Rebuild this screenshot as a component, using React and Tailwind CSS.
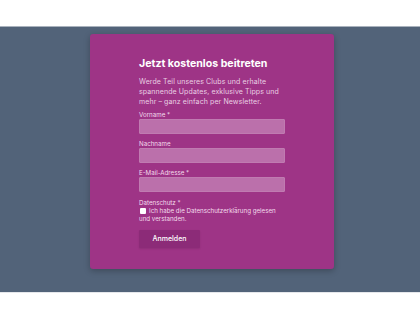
import React from "react";

const Field = ({ label }) => (
    <div className="flex flex-col">
        <label className="text-[6.2px] leading-[8px] text-[#f3dcec]">{label}</label>
        <input
            type="text"
            className="h-[15px] w-full bg-[#bb70ab] border border-[#c07bb1] rounded-[1px] outline-none"
        />
    </div>
);

export default function App() {
    return (
        <div className="w-[420px] h-[313px] bg-white font-['Inter',sans-serif]">
            <div className="h-[26px] bg-white" />
            <section className="h-[266px] bg-[#526379] border-t border-[#a9b2bd] pt-[7px]">
                <div className="ml-[90px] w-[244px] h-[235px] bg-[#9e3486] rounded-[3px] shadow-[0_2px_6px_rgba(0,0,0,0.25)] px-[49px] pt-[23px]">
                    <h2 className="text-[10.6px] leading-[14px] font-bold text-white">
                        Jetzt kostenlos beitreten
                    </h2>
                    <p className="mt-[6px] text-[7px] leading-[10px] tracking-[0.1px] text-[#e9cfe3]">
                        Werde Teil unseres Clubs und erhalte spannende Updates, exklusive Tipps und mehr – ganz einfach per Newsletter.
                    </p>

                    <div className="mt-[4px] flex flex-col gap-[6px]">
                        <Field label="Vorname *" />
                        <Field label="Nachname" />
                        <Field label="E-Mail-Adresse *" />
                    </div>

                    <div className="mt-[7px]">
                        <p className="text-[6.2px] leading-[8px] text-[#f3dcec]">Datenschutz *</p>
                        <label className="block text-[6.2px] leading-[8px] text-[#f3dcec]">
                            <span className="inline-block align-[-1px] w-[6px] h-[6px] bg-white rounded-[1px] mr-[3px] ml-[1px]" />
                            Ich habe die Datenschutzerklärung gelesen und verstanden.
                        </label>
                    </div>

                    <button className="mt-[6px] w-[61px] h-[18px] bg-[#8c2b78] text-white text-[7px] font-medium rounded-[1px] shadow-[0_1px_2px_rgba(0,0,0,0.1)]">
                        Anmelden
                    </button>
                </div>
            </section>
            <div className="border-t border-[#e5e7eb]" />
        </div>
    );
}
